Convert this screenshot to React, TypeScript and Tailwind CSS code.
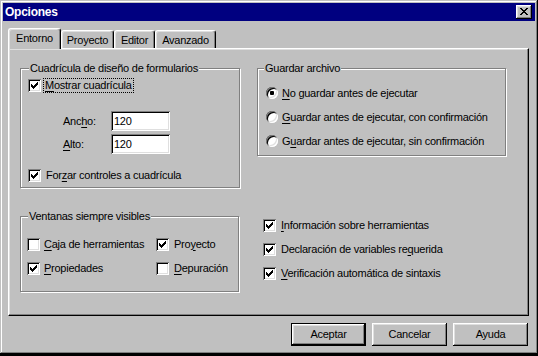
import React from "react";

const CHECK: [number, number][] = [
  [6, 0], [5, 1], [6, 1], [0, 2], [4, 2], [5, 2], [6, 2],
  [0, 3], [1, 3], [3, 3], [4, 3], [5, 3],
  [0, 4], [1, 4], [2, 4], [3, 4], [4, 4],
  [1, 5], [2, 5], [3, 5], [2, 6],
];

const XPIX: [number, number][] = [
  [0, 0], [1, 0], [6, 0], [7, 0],
  [1, 1], [2, 1], [5, 1], [6, 1],
  [2, 2], [3, 2], [4, 2], [5, 2],
  [3, 3], [4, 3],
  [2, 4], [3, 4], [4, 4], [5, 4],
  [1, 5], [2, 5], [5, 5], [6, 5],
  [0, 6], [1, 6], [6, 6], [7, 6],
];

function Pix({ pts, w, h }: { pts: [number, number][]; w: number; h: number }) {
  return (
    <svg width={w} height={h} viewBox={`0 0 ${w} ${h}`} shapeRendering="crispEdges" className="block">
      {pts.map(([x, y], i) => (
        <rect key={i} x={x} y={y} width={1} height={1} fill="#000" />
      ))}
    </svg>
  );
}

function U({ t, i }: { t: string; i?: number }) {
  if (i === undefined) return <>{t}</>;
  return (
    <>
      {t.slice(0, i)}
      <u className="underline decoration-1 underline-offset-[2px]">{t[i]}</u>
      {t.slice(i + 1)}
    </>
  );
}

const sunken =
  "shadow-[inset_1px_1px_#808080,inset_-1px_-1px_#ffffff,inset_2px_2px_#000000,inset_-2px_-2px_#dfdfdf]";
const raised =
  "shadow-[inset_-1px_-1px_#000000,inset_1px_1px_#ffffff,inset_-2px_-2px_#808080,inset_2px_2px_#dfdfdf]";

function Check({ checked }: { checked?: boolean }) {
  return (
    <span className={`flex w-[13px] h-[13px] shrink-0 items-center justify-center bg-white ${sunken}`}>
      {checked && <Pix pts={CHECK} w={7} h={7} />}
    </span>
  );
}

function Radio({ checked }: { checked?: boolean }) {
  return (
    <span
      className={`flex w-[12px] h-[12px] shrink-0 items-center justify-center rounded-full bg-white ${sunken}`}
    >
      {checked && <span className="w-[4px] h-[4px] rounded-[1px] bg-black" />}
    </span>
  );
}

function Group({
  title,
  className,
  labelClass,
  children,
}: {
  title: string;
  className: string;
  labelClass: string;
  children?: React.ReactNode;
}) {
  return (
    <div
      className={`flex flex-col border border-[#808080] shadow-[inset_1px_1px_#ffffff,1px_1px_#ffffff] ${className}`}
    >
      <span className={`-mt-[7px] self-start bg-[#c0c0c0] px-[1px] leading-[13px] ${labelClass}`}>{title}</span>
      {children}
    </div>
  );
}

function Tab({ label, active, w }: { label: string; active?: boolean; w: string }) {
  if (active) {
    return (
      <div
        className={`relative z-10 -mb-px flex h-[21px] ${w} items-center justify-center rounded-t-[3px] border-l border-t border-r border-l-white border-t-white border-r-black bg-[#c0c0c0] pb-[1px] shadow-[inset_-1px_0_#808080,inset_1px_1px_#dfdfdf]`}
      >
        {label}
      </div>
    );
  }
  return (
    <div
      className={`flex h-[18px] ${w} items-center justify-center rounded-t-[3px] border-l border-t border-r border-l-white border-t-white border-r-black bg-[#c0c0c0] pt-[2px] shadow-[inset_-1px_0_#808080,inset_1px_1px_#dfdfdf]`}
    >
      {label}
    </div>
  );
}

function Button({ label, def }: { label: string; def?: boolean }) {
  if (def) {
    return (
      <div className="w-[75px] h-[23px] border border-black">
        <div className={`flex h-full w-full items-center justify-center ${raised}`}>{label}</div>
      </div>
    );
  }
  return <div className={`flex w-[75px] h-[23px] items-center justify-center ${raised}`}>{label}</div>;
}

export default function App() {
  return (
    <div className="w-[538px] h-[356px] bg-black overflow-hidden font-['Liberation_Sans',Arial,sans-serif] text-[11px] leading-[13px] tracking-[-0.25px] text-black">
      <div className="flex h-[354px] w-[538px] flex-col bg-[#c0c0c0] p-[3px] shadow-[inset_-1px_-1px_#000000,inset_1px_1px_#c0c0c0,inset_-2px_-2px_#808080,inset_2px_2px_#ffffff]">
        {/* Title bar */}
        <div className="flex h-[18px] shrink-0 items-center justify-between bg-[#000080] pl-[2px] pr-[3px]">
          <span className="text-[12px] font-bold text-white">Opciones</span>
          <div className={`w-[16px] h-[14px] bg-[#c0c0c0] pl-[4px] pt-[3px] ${raised}`}>
            <Pix pts={XPIX} w={8} h={7} />
          </div>
        </div>

        {/* Tabs */}
        <div className="ml-[5px] mt-[7px] flex h-[20px] items-end">
          <Tab label="Entorno" active w="w-[53px]" />
          <Tab label="Proyecto" w="w-[53px]" />
          <Tab label="Editor" w="w-[41px]" />
          <Tab label="Avanzado" w="w-[61px]" />
        </div>

        {/* Panel */}
        <div className="ml-[5px] flex h-[268px] w-[521px] flex-col border border-l-white border-t-white border-r-black border-b-black pl-[11px] pt-[19px] shadow-[inset_-1px_-1px_#808080,inset_1px_1px_#dfdfdf]">
          <div className="flex items-start gap-[17px]">
            <Group title="Cuadrícula de diseño de formularios" className="w-[220px] h-[120px]" labelClass="ml-[8px]">
              <div className="mt-[3px] flex h-[15px] items-center pl-[7px]">
                <Check checked />
                <span className="ml-[2px] border border-dotted border-black px-[1px]">
                  <U t="Mostrar cuadrícula" i={0} />
                </span>
              </div>
              <div className="mt-[18px] flex items-center pl-[42px]">
                <span className="w-[48px]">
                  <U t="Ancho:" i={3} />
                </span>
                <div className={`flex h-[20px] w-[59px] items-center bg-white pl-[3px] ${sunken}`}>120</div>
              </div>
              <div className="mt-[3px] flex items-center pl-[42px]">
                <span className="w-[48px]">
                  <U t="Alto:" i={0} />
                </span>
                <div className={`flex h-[20px] w-[59px] items-center bg-white pl-[3px] ${sunken}`}>120</div>
              </div>
              <div className="mt-[14px] flex h-[14px] items-center pl-[7px]">
                <Check checked />
                <span className="ml-[5px]">
                  <U t="Forzar controles a cuadrícula" i={3} />
                </span>
              </div>
            </Group>

            <Group title="Guardar archivo" className="w-[249px] h-[88px]" labelClass="ml-[6px]">
              <div className="mt-[10px] flex flex-col gap-[8px] pl-[8px]">
                <div className="flex h-[16px] items-center">
                  <Radio checked />
                  <span className="ml-[4px]">
                    <U t="No guardar antes de ejecutar" i={0} />
                  </span>
                </div>
                <div className="flex h-[16px] items-center">
                  <Radio />
                  <span className="ml-[4px]">
                    <U t="Guardar antes de ejecutar, con confirmación" i={0} />
                  </span>
                </div>
                <div className="flex h-[16px] items-center">
                  <Radio />
                  <span className="ml-[4px]">
                    <U t="Guardar antes de ejecutar, sin confirmación" i={1} />
                  </span>
                </div>
              </div>
            </Group>
          </div>

          <div className="mt-[28px] flex items-start">
            <Group title="Ventanas siempre visibles" className="w-[219px] h-[76px]" labelClass="ml-[7px]">
              <div className="mt-[13px] grid grid-cols-[129px_1fr] gap-y-[8px] pl-[6px]">
                <div className="flex h-[16px] items-center">
                  <Check />
                  <span className="ml-[4px]">
                    <U t="Caja de herramientas" i={0} />
                  </span>
                </div>
                <div className="flex h-[16px] items-center">
                  <Check checked />
                  <span className="ml-[5px]">
                    <U t="Proyecto" i={3} />
                  </span>
                </div>
                <div className="flex h-[16px] items-center">
                  <Check checked />
                  <span className="ml-[4px]">
                    <U t="Propiedades" i={0} />
                  </span>
                </div>
                <div className="flex h-[16px] items-center">
                  <Check />
                  <span className="ml-[5px]">
                    <U t="Depuración" i={0} />
                  </span>
                </div>
              </div>
            </Group>

            <div className="ml-[24px] mt-[1px] flex flex-col gap-[8px]">
              <div className="flex h-[16px] items-center">
                <Check checked />
                <span className="ml-[5px]">
                  <U t="Información sobre herramientas" i={0} />
                </span>
              </div>
              <div className="flex h-[16px] items-center">
                <Check checked />
                <span className="ml-[5px]">
                  <U t="Declaración de variables requerida" i={27} />
                </span>
              </div>
              <div className="flex h-[16px] items-center">
                <Check checked />
                <span className="ml-[5px]">
                  <U t="Verificación automática de sintaxis" i={0} />
                </span>
              </div>
            </div>
          </div>
        </div>

        {/* Buttons */}
        <div className="mt-[7px] flex justify-end gap-[6px] pr-[7px]">
          <Button label="Aceptar" def />
          <Button label="Cancelar" />
          <Button label="Ayuda" />
        </div>
      </div>
    </div>
  );
}
